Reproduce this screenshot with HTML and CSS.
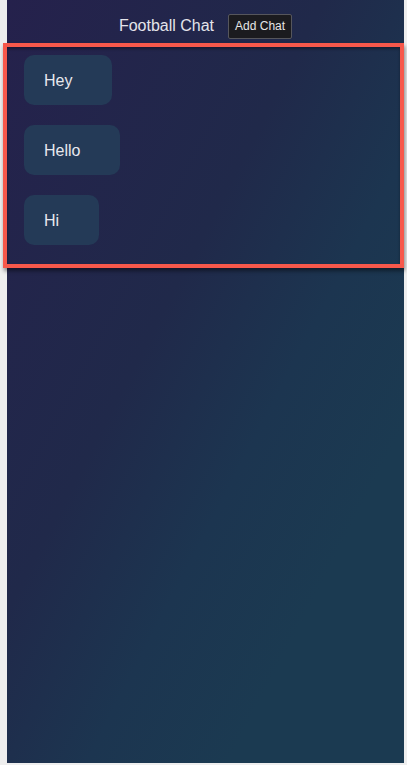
FILE: index.html
```html
<!DOCTYPE html>
<html lang="en">
<head>
<meta charset="utf-8">
<title>Football Chat</title>
<link rel="stylesheet" href="styles.css">
</head>
<body>
<div class="app">
  <header class="header">
    <h1 class="title">Football Chat</h1>
    <button class="add-btn" type="button">Add Chat</button>
  </header>
  <ul class="chat-list">
    <li class="bubble">Hey</li>
    <li class="bubble">Hello</li>
    <li class="bubble">Hi</li>
  </ul>
</div>
</body>
</html>
```

FILE: styles.css
```css
html, body {
  margin: 0;
  padding: 0;
}
body {
  background: #eeeeee;
  font-family: "Liberation Sans", Arial, sans-serif;
  width: 407px;
  height: 765px;
  overflow: hidden;
}
.app {
  margin-left: 7px;
  width: 397px;
  height: 763px;
  background: linear-gradient(to bottom right, #25214c 0%, #20294a 40%, #1c3550 60%, #1b3a51 78%);
  display: flex;
  flex-direction: column;
}
.header {
  height: 47px;
  display: flex;
  align-items: center;
  justify-content: center;
  gap: 14px;
  padding-top: 5px;
  box-sizing: border-box;
}
.title {
  margin: 0;
  font-size: 16px;
  font-weight: normal;
  color: #e4e4ea;
  line-height: 18px;
  margin-top: -1px;
}
.add-btn {
  font-family: "Liberation Sans", Arial, sans-serif;
  font-size: 12px;
  line-height: 15px;
  padding: 4px 6px;
  background: #1b1b1f;
  color: #e6e6e6;
  border: 1px solid #56565c;
  border-radius: 2px;
}
.chat-list {
  list-style: none;
  margin: 0 4px 0 0;
  padding: 8px 0 19px 17px;
  display: flex;
  flex-direction: column;
  align-items: flex-start;
  gap: 20px;
  outline: 4px solid #f7584b;
  box-shadow: 1px 3px 4px 4px rgba(0, 0, 0, 0.45), inset 0 2px 3px rgba(0, 0, 0, 0.35);
}
.bubble {
  height: 50px;
  line-height: 52px;
  padding: 0 40px 0 20px;
  background: #243a57;
  border-radius: 10px;
  color: #e8e8ee;
  font-size: 16px;
}
```
